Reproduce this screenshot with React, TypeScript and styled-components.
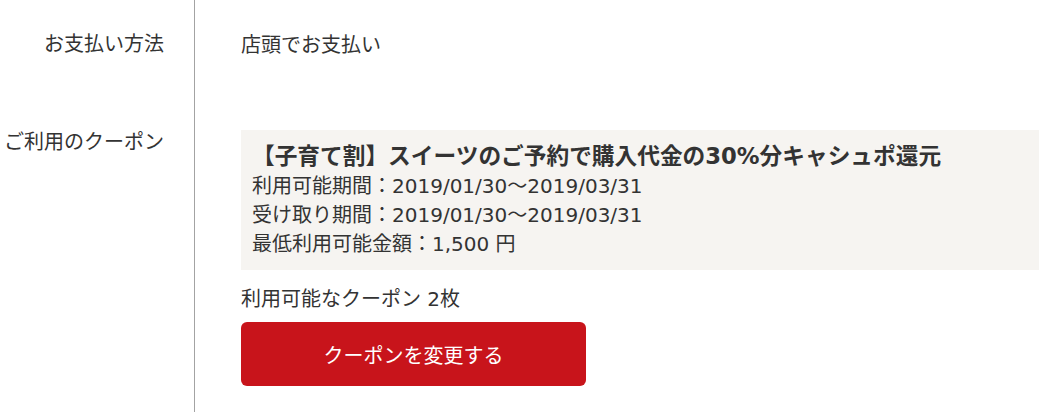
import { FC } from 'react';
import styled, { createGlobalStyle } from 'styled-components';

const GlobalStyle = createGlobalStyle`
  html, body {
    margin: 0;
    padding: 0;
    background: #fff;
  }

  body {
    font-family: 'DejaVu Sans', 'Noto Sans CJK JP', sans-serif;
    font-size: 20px;
    line-height: 29px;
    color: #333;
  }
`;

const Table = styled.div`
  width: 1039px;
  height: 412px;
  overflow: hidden;
  display: flex;
  flex-direction: column;
`;

const Row = styled.div<{ $grow?: boolean }>`
  display: grid;
  grid-template-columns: 195px 1fr;
  flex: ${props => (props.$grow ? '1 1 auto' : '0 0 auto')};
`;

const Label = styled.div<{ $top: number; $bottom: number }>`
  border-right: 1px solid #a3a3a3;
  padding: ${props => `${props.$top}px 30px ${props.$bottom}px 0`};
  text-align: right;
  white-space: nowrap;
`;

const Cell = styled.div<{ $top: number }>`
  padding: ${props => `${props.$top}px 0 0 46px`};
  display: flex;
  flex-direction: column;
  align-items: flex-start;
`;

const CouponBox = styled.div`
  align-self: stretch;
  background-color: #f6f4f1;
  padding: 10px 11px 11px;
`;

const CouponTitle = styled.div`
  font-size: 22.7px;
  font-weight: bold;
  line-height: 32px;
  white-space: nowrap;
`;

const CouponLine = styled.div`
  white-space: nowrap;
`;

const Available = styled.div`
  margin-top: 15px;
`;

const ChangeButton = styled.button`
  margin-top: 8px;
  width: 345px;
  height: 64px;
  border: none;
  border-radius: 6px;
  background-color: #c8141b;
  color: #fff;
  font-family: inherit;
  font-size: 20px;
  cursor: pointer;
`;

const couponLines = [
  '利用可能期間：2019/01/30～2019/03/31',
  '受け取り期間：2019/01/30～2019/03/31',
  '最低利用可能金額：1,500 円',
];

const App: FC = () => {
  return (
    <>
      <GlobalStyle />
      <Table>
        <Row>
          <Label $top={30} $bottom={39}>お支払い方法</Label>
          <Cell $top={31}>店頭でお支払い</Cell>
        </Row>
        <Row $grow>
          <Label $top={30} $bottom={0}>ご利用のクーポン</Label>
          <Cell $top={32}>
            <CouponBox>
              <CouponTitle>【子育て割】スイーツのご予約で購入代金の30%分キャシュポ還元</CouponTitle>
              {couponLines.map(line => (
                <CouponLine key={line}>{line}</CouponLine>
              ))}
            </CouponBox>
            <Available>利用可能なクーポン 2枚</Available>
            <ChangeButton type='button'>クーポンを変更する</ChangeButton>
          </Cell>
        </Row>
      </Table>
    </>
  );
};

export default App;
